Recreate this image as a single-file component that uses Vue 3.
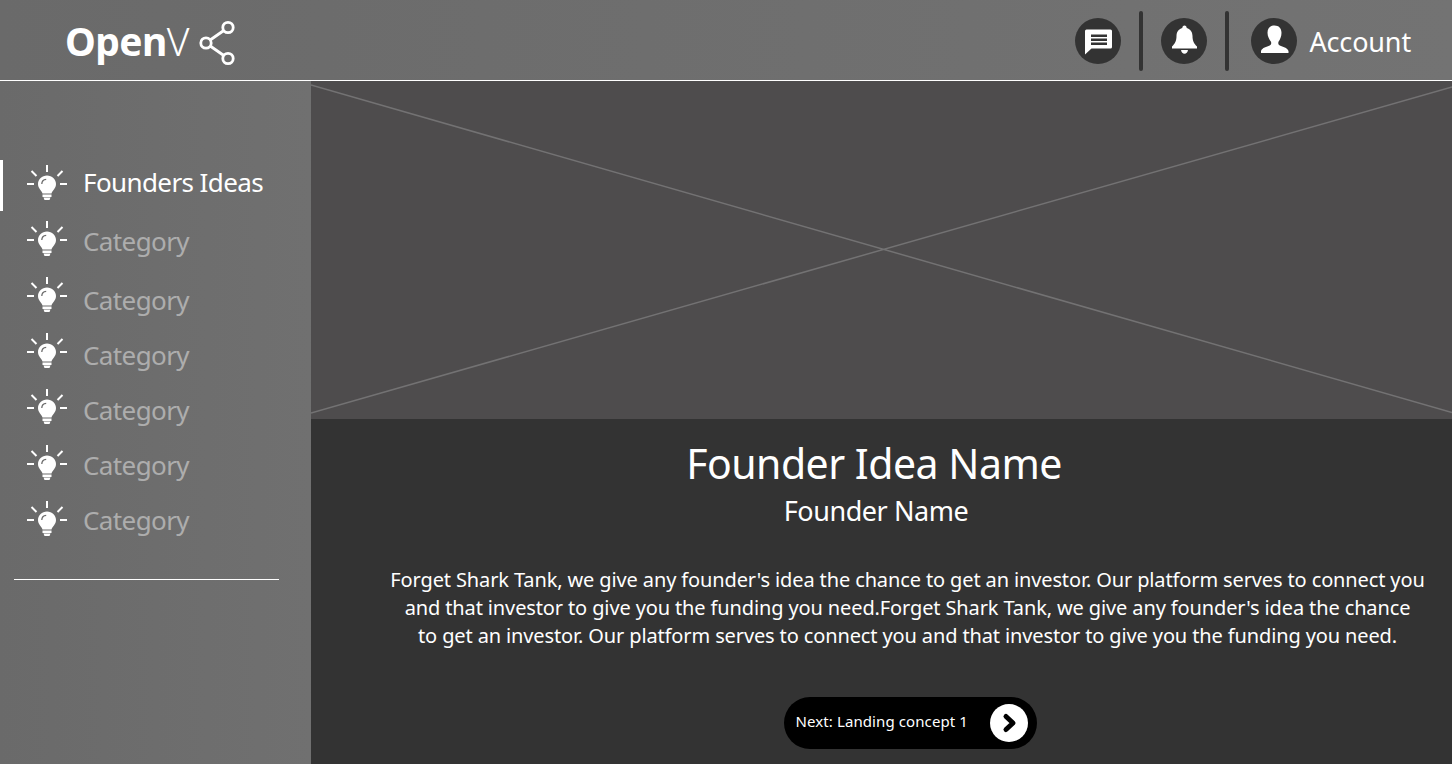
<template>
  <div class="page">
    <header class="topbar">
      <div class="logo">
        <span class="logo-bold">Open</span><span class="logo-thin">V</span>
        <svg class="share" width="38" height="46" viewBox="0 0 38 46">
          <g fill="none" stroke="#fff" stroke-width="2.8">
            <circle cx="30" cy="7.5" r="5.2" />
            <circle cx="8" cy="23" r="5.2" />
            <circle cx="30" cy="38.5" r="5.2" />
            <path d="M12.2 20 25.8 10.5M12.2 26 25.8 35.5" />
          </g>
        </svg>
      </div>
      <div class="top-actions">
        <div class="round">
          <svg width="30" height="30" viewBox="0 0 30 30">
            <path fill="#fff" d="M3.500 3.500h24a1.500 1.500 0 0 1 1.500 1.500v16a1.500 1.500 0 0 1-1.500 1.500H8.500L2 28.500V5a1.500 1.500 0 0 1 1.500-1.500z" />
            <path stroke="#333" stroke-width="2.600" d="M8 9.700h16M8 13.700h16M8 17.700h16" />
          </svg>
        </div>
        <span class="sep"></span>
        <div class="round">
          <svg width="30" height="34" viewBox="0 0 30 34">
            <path fill="#fff" d="M15.500 1.500c1.300 0 2.200 1 2.200 2.400 3.800 1 5.800 4.200 5.800 8.100 0 5 1.500 7.500 4.500 10.500v2H3v-2c3-3 4.500-5.500 4.500-10.500 0-3.900 2-7.100 5.800-8.100 0-1.400.9-2.400 2.200-2.400z" />
            <path fill="#fff" d="M12 26h7c-.5 2.500-1.700 3.800-3.500 3.800s-3-1.300-3.500-3.800z" />
          </svg>
        </div>
        <span class="sep"></span>
        <div class="round account-round">
          <svg width="30" height="34" viewBox="0 0 30 34">
            <path fill="#fff" d="M15.500 1.500c4.300 0 7 2.800 7 7.200 0 3.600-1.400 7-3 9-.5 1.600-.2 3 1.300 3.800 3 1.500 7.500 2 8.700 5.500v2H2v-2c1.200-3.500 5.700-4 8.700-5.500 1.500-.8 1.800-2.200 1.300-3.800-1.600-2-3.500-5.400-3.500-9 0-4.400 2.700-7.200 7-7.200z" />
          </svg>
        </div>
        <span class="account">Account</span>
      </div>
    </header>

    <div class="main">
      <aside class="sidebar">
        <div class="active-bar"></div>
        <div class="menu">
          <div class="menu-icons">
            <svg v-for="n in items.length" :key="n" width="42" height="36" viewBox="0 0 42 36">
              <g stroke="#fff" stroke-width="2" fill="none">
                <path d="M20 0v7M4.500 6l5 5M35.500 6l-5 5M0 19h7M33 19h7" />
              </g>
              <path fill="#fff" d="M20 10.500c5 0 9 3.800 9 8.500 0 4.500-3.500 6-4.500 9.500h-9C14.500 25 11 23.500 11 19c0-4.700 4-8.500 9-8.500z" />
              <path fill="#fff" d="M15.500 29.500h9v2.500h-9zM16.500 32.500h7l-1 2.500h-5z" />
              <path fill="none" stroke="#6d6d6d" stroke-width="1.300" d="M14.800 19c0-2.600 1.900-4.500 4.400-4.700" />
            </svg>
          </div>
          <div class="menu-labels">
            <div v-for="(item, i) in items" :key="i" class="label" :class="{ active: i === 0, first: i === 1 }">
              {{ item }}
            </div>
          </div>
        </div>
        <div class="divider"></div>
      </aside>

      <section class="content">
        <div class="placeholder">
          <svg width="100%" height="100%" viewBox="0 0 1141 338" preserveAspectRatio="none">
            <path d="M0 4 1141 331.500M0 332 1141 6" stroke="#737273" stroke-width="1.500" fill="none" />
          </svg>
        </div>
        <div class="details">
          <h1>Founder Idea Name</h1>
          <h2>Founder Name</h2>
          <p>
            <template v-for="line in blurb" :key="line">{{ line }}<br /></template>
          </p>
          <button class="next">
            <span class="next-text">Next: Landing concept 1</span>
            <span class="next-circle">
              <svg width="20" height="22" viewBox="0 0 20 22">
                <path d="M7 4.500l7 6.500-7 6.500" fill="none" stroke="#000" stroke-width="5" stroke-linecap="round" stroke-linejoin="round" />
              </svg>
            </span>
          </button>
        </div>
      </section>
    </div>
  </div>
</template>

<script setup>
const items = ['Founders Ideas', 'Category', 'Category', 'Category', 'Category', 'Category', 'Category']

const blurb = [
  "Forget Shark Tank, we give any founder's idea the chance to get an investor. Our platform serves to connect you",
  "and that investor to give you the funding you need.Forget Shark Tank, we give any founder's idea the chance",
  'to get an investor. Our platform serves to connect you and that investor to give you the funding you need.',
]
</script>

<style>
html,
body {
  margin: 0;
  background: #333;
}
</style>

<style scoped>
.page {
  width: 1452px;
  height: 764px;
  overflow: hidden;
  font-family: 'Noto Sans', 'Open Sans', sans-serif;
  color: #fff;
  display: flex;
  flex-direction: column;
}

.topbar {
  height: 80px;
  flex: none;
  border-bottom: 1px solid #fff;
  background: linear-gradient(90deg, #6a6a6a, #737373);
  display: flex;
  align-items: center;
  justify-content: space-between;
  padding: 0 41px 0 65px;
}

.logo {
  display: flex;
  align-items: center;
  font-size: 39px;
  letter-spacing: -0.6px;
}

.logo-bold {
  font-weight: 700;
}

.logo-thin {
  font-weight: 300;
}

.share {
  margin: 6px 0 0 9px;
}

.top-actions {
  display: flex;
  align-items: center;
  margin-top: 2px;
}

.round {
  width: 46px;
  height: 46px;
  border-radius: 50%;
  background: #333;
  display: flex;
  align-items: center;
  justify-content: center;
}

.sep {
  width: 4px;
  height: 60px;
  border-radius: 2px;
  background: #333;
  margin: 0 18px;
}

.account-round {
  margin-left: 4px;
}

.account {
  font-size: 27px;
  letter-spacing: -0.15px;
  margin-left: 12px;
}

.main {
  flex: 1;
  display: flex;
  min-height: 0;
}

.sidebar {
  width: 311px;
  flex: none;
  position: relative;
  background: linear-gradient(90deg, #6a6a6a, #707070);
  padding-top: 84px;
  box-sizing: border-box;
}

.active-bar {
  position: absolute;
  left: 0;
  top: 79px;
  width: 3px;
  height: 51px;
  background: #fff;
}

.menu {
  display: flex;
  gap: 14px;
  padding-left: 27px;
  height: 414px;
}

.menu-labels {
  margin-top: -1px;
}

.menu-icons {
  display: flex;
  flex-direction: column;
  gap: 20px;
}

.label {
  font-size: 26px;
  letter-spacing: -0.6px;
  line-height: 40px;
  height: 55px;
  color: #adadad;
}

.label.active {
  color: #fff;
  height: 59px;
  margin-top: -2px;
}

.label.first {
  height: 59px;
}

.divider {
  height: 1px;
  margin: 0 32px 0 14px;
  background: #fff;
}

.content {
  flex: 1;
  display: flex;
  flex-direction: column;
  min-width: 0;
}

.placeholder {
  height: 338px;
  background: #4e4c4d;
}

.placeholder svg {
  display: block;
}

.details {
  flex: 1;
  background: #333;
  display: flex;
  flex-direction: column;
  align-items: center;
}

h1 {
  margin: 13px 15px 1px 0;
  font-size: 41px;
  letter-spacing: -0.5px;
  line-height: 62px;
  font-weight: 400;
}

h2 {
  margin: 0 11px 0 0;
  font-size: 27px;
  letter-spacing: -0.45px;
  line-height: 32px;
  font-weight: 400;
}

p {
  margin: 39px 0 0 52px;
  width: 1050px;
  font-size: 20px;
  letter-spacing: -0.125px;
  line-height: 28px;
  text-align: center;
  white-space: nowrap;
}

.next {
  margin: 47px 0 0 57px;
  width: 253px;
  height: 52px;
  border: none;
  border-radius: 26px;
  background: #000;
  color: #fff;
  font-family: inherit;
  font-size: 15px;
  letter-spacing: 0.1px;
  display: flex;
  align-items: center;
  justify-content: space-between;
  padding: 0 9px 0 12px;
}

.next-text {
  padding-bottom: 4px;
}

.next-circle {
  width: 38px;
  height: 38px;
  border-radius: 50%;
  background: #fff;
  display: flex;
  align-items: center;
  justify-content: center;
}
</style>
